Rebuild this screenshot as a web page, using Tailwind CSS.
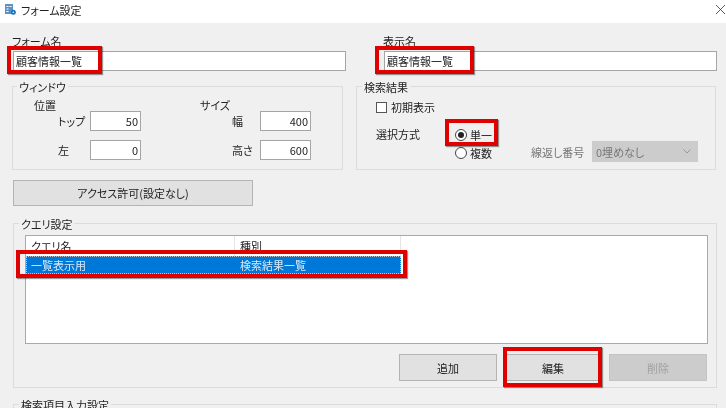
<!DOCTYPE html>
<html lang="ja">
<head>
<meta charset="utf-8">
<title>フォーム設定</title>
<script src="https://cdn.jsdelivr.net/npm/@tailwindcss/browser@4"></script>
</head>
<body class="m-0 bg-[#f0f0f0]">
<div class="relative w-[726px] h-[408px] overflow-hidden bg-[#f0f0f0] text-[11px] leading-[14px] text-[#222] whitespace-nowrap font-['Noto_Sans_CJK_JP','Noto_Sans',sans-serif] [font-feature-settings:'palt'] blur-[0.35px]">

    <!-- title bar -->
    <div class="flex items-center h-[23px] bg-white pl-[5px] pr-[1px] pb-[4px]">
        <svg width="11" height="11" viewBox="0 0 11 11" class="mr-[5px]">
            <rect x="0" y="0" width="8" height="10" fill="#5b93c9"/>
            <path d="M1.5 2.5h2M4.5 2.5h2M1.5 5h2M1.5 7.5h2" stroke="#fff" stroke-width="1"/>
            <circle cx="8.3" cy="8.3" r="2.5" fill="#1c6fb5"/>
            <circle cx="8.3" cy="8.3" r="0.8" fill="#fff"/>
        </svg>
        <span>フォーム設定</span>
        <svg width="9" height="9" viewBox="0 0 9 9" class="ml-auto">
            <path d="M0 0L9 9M9 0L0 9" stroke="#333" stroke-width="0.8"/>
        </svg>
    </div>

    <div class="pl-[12px] pr-[9px]">
        <!-- names -->
        <div class="flex pt-[11px] pl-[1px]">
            <div class="w-[333px]">
                <div class="h-[14px] mb-[3px] -ml-[1px]">フォーム名</div>
                <div class="h-[20px] bg-white border border-[#a5a5a5] pl-[2px] leading-[18px]">顧客情報一覧</div>
            </div>
            <div class="w-[333px] ml-[38px]">
                <div class="h-[14px] mb-[3px] -ml-[1px]">表示名</div>
                <div class="h-[20px] bg-white border border-[#a5a5a5] pl-[2px] leading-[18px]">顧客情報一覧</div>
            </div>
        </div>

        <!-- window / search result -->
        <div class="flex mt-[15px] h-[84px]">
            <div class="relative w-[331px] border border-[#dcdcdc] flex pt-[11px]">
                <span class="absolute -top-[7px] left-[4px] bg-[#f0f0f0] px-[2px]">ウィンドウ</span>
                <div class="w-[187px] pl-[21px]">
                    <div class="h-[13px]">位置</div>
                    <div class="flex items-center h-[20px] ml-[24px]">
                        <span class="w-[32px]">トップ</span>
                        <div class="w-[51px] h-[20px] bg-white border border-[#a5a5a5] pr-[2px] text-right leading-[18px]">50</div>
                    </div>
                    <div class="flex items-center h-[20px] ml-[24px] mt-[9px]">
                        <span class="w-[32px]">左</span>
                        <div class="w-[51px] h-[20px] bg-white border border-[#a5a5a5] pr-[2px] text-right leading-[18px]">0</div>
                    </div>
                </div>
                <div>
                    <div class="h-[13px]">サイズ</div>
                    <div class="flex items-center h-[20px] ml-[32px]">
                        <span class="w-[28px]">幅</span>
                        <div class="w-[51px] h-[20px] bg-white border border-[#a5a5a5] pr-[2px] text-right leading-[18px]">400</div>
                    </div>
                    <div class="flex items-center h-[20px] ml-[32px] mt-[9px]">
                        <span class="w-[28px]">高さ</span>
                        <div class="w-[51px] h-[20px] bg-white border border-[#a5a5a5] pr-[2px] text-right leading-[18px]">600</div>
                    </div>
                </div>
            </div>

            <div class="relative w-[360px] ml-[13px] border border-[#dcdcdc] pl-[19px] pt-[14px]">
                <span class="absolute -top-[7px] left-[5px] bg-[#f0f0f0] px-[2px]">検索結果</span>
                <div class="flex items-center h-[12px]">
                    <span class="w-[11px] h-[11px] bg-white border border-[#555] mr-[4px]"></span>
                    <span>初期表示</span>
                </div>
                <div class="flex mt-[14px]">
                    <span class="w-[79px]">選択方式</span>
                    <div class="w-[39px]">
                        <div class="flex items-center h-[15px]">
                            <span class="flex items-center justify-center shrink-0 w-[12px] h-[12px] rounded-full bg-white border border-[#444] mr-[3px]">
                                <span class="w-[6px] h-[6px] rounded-full bg-[#222]"></span>
                            </span>
                            <span>単一</span>
                        </div>
                        <div class="flex items-center h-[15px] mt-[3px]">
                            <span class="shrink-0 w-[12px] h-[12px] rounded-full bg-white border border-[#444] mr-[3px]"></span>
                            <span>複数</span>
                        </div>
                    </div>
                    <div class="flex items-center self-start mt-[14px] ml-[37px]">
                        <span class="w-[61px] text-[#777]">線返し番号</span>
                        <div class="flex items-center justify-between w-[106px] h-[21px] bg-[#cccccc] pl-[4px] pr-[7px] text-[#777]">
                            <span>0埋めなし</span>
                            <svg width="8" height="5" viewBox="0 0 8 5"><path d="M0.5 0.5L4 4L7.5 0.5" fill="none" stroke="#999" stroke-width="1"/></svg>
                        </div>
                    </div>
                </div>
            </div>
        </div>

        <!-- access -->
        <div class="flex items-center justify-center w-[240px] h-[26px] ml-[1px] mt-[10px] bg-[#e1e1e1] border border-[#b4b4b4]">アクセス許可(設定なし)</div>

        <!-- query settings -->
        <div class="relative w-[704px] h-[165px] ml-[1px] mt-[17px] border border-[#dcdcdc] pt-[11px] pl-[11px]">
            <span class="absolute -top-[7px] left-[5px] bg-[#f0f0f0] px-[2px]">クエリ設定</span>
            <div class="w-[683px] h-[109px] bg-white border border-[#a9a9a9]">
                <div class="flex h-[20px] leading-[20px]">
                    <div class="w-[209px] pl-[5px] border-r border-[#e5e5e5]">クエリ名</div>
                    <div class="w-[166px] pl-[5px] border-r border-[#e5e5e5]">種別</div>
                </div>
                <div class="flex w-[375px] h-[18px] leading-[16px] bg-[#0078d7] text-[#d8e8f7] border border-dotted border-[#b9c6d2]">
                    <div class="w-[208px] pl-[4px]">一覧表示用</div>
                    <div class="pl-[5px]">検索結果一覧</div>
                </div>
            </div>
            <div class="flex justify-end gap-[7px] w-[682px] mt-[10px]">
                <div class="flex items-center justify-center w-[98px] h-[27px] bg-[#e1e1e1] border border-[#b4b4b4]">追加</div>
                <div class="flex items-center justify-center w-[98px] h-[27px] bg-[#e1e1e1] border border-[#b4b4b4]">編集</div>
                <div class="flex items-center justify-center w-[98px] h-[27px] bg-[#cccccc] border border-[#c4c4c4] text-[#a0a0a0]">削除</div>
            </div>
        </div>

        <!-- next group, cut off by the window -->
        <div class="relative w-[704px] h-[20px] ml-[1px] mt-[16px] border border-[#dcdcdc]">
            <span class="absolute -top-[7px] left-[5px] bg-[#f0f0f0] px-[2px]">検索項目入力設定</span>
        </div>
    </div>

    <!-- red annotation boxes -->
    <div class="absolute left-[7px] top-[46px] w-[95px] h-[28px] border-4 border-[#e00000] shadow-[1px_1px_1px_rgba(0,0,0,0.4)]"></div>
    <div class="absolute left-[375px] top-[46px] w-[99px] h-[28px] border-4 border-[#e00000] shadow-[1px_1px_1px_rgba(0,0,0,0.4)]"></div>
    <div class="absolute left-[445px] top-[119px] w-[53px] h-[27px] border-4 border-[#e00000] shadow-[1px_1px_1px_rgba(0,0,0,0.4)]"></div>
    <div class="absolute left-[16px] top-[250px] w-[391px] h-[28px] border-4 border-[#e00000] shadow-[1px_1px_1px_rgba(0,0,0,0.4)]"></div>
    <div class="absolute left-[503px] top-[347px] w-[99px] h-[40px] border-4 border-[#e00000] shadow-[1px_1px_1px_rgba(0,0,0,0.4)]"></div>
</div>
</body>
</html>
